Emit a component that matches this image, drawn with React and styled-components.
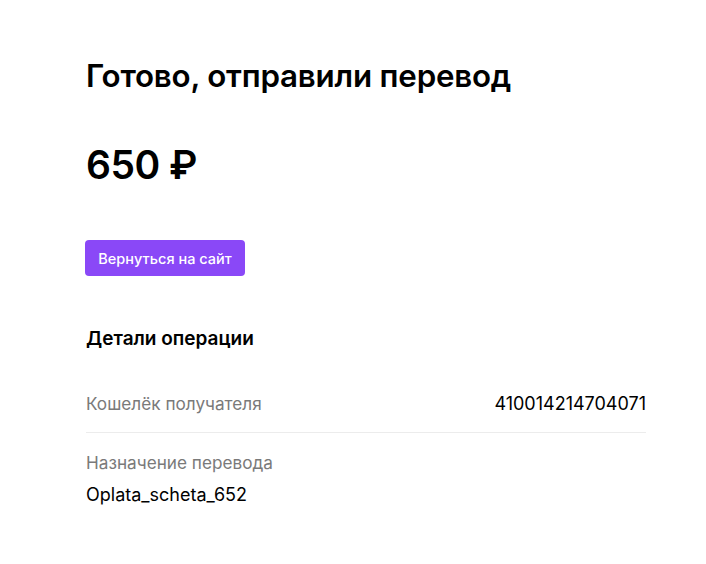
import React from "react";
import styled, { createGlobalStyle } from "styled-components";

const Global = createGlobalStyle`
  html, body { margin: 0; padding: 0; background: #fff; }
  body { font-family: Inter, "Noto Sans", sans-serif; color: #000; }
`;

const Page = styled.main`
  width: 560px;
  padding: 56px 0 0 86px;
  display: flex;
  flex-direction: column;
`;

const Title = styled.h1`
  margin: 0;
  font-size: 31.3px;
  line-height: 40px;
  font-weight: 600;
  letter-spacing: -0.2px;
`;

const Amount = styled.div`
  margin-top: 44px;
  font-size: 39px;
  line-height: 50px;
  font-weight: 600;
  letter-spacing: -0.5px;
`;

const Button = styled.button`
  margin-top: 50px;
  margin-left: -1px;
  align-self: flex-start;
  width: 160px;
  height: 36px;
  border: none;
  border-radius: 4px;
  background: #8a48f7;
  color: #fff;
  font-family: inherit;
  font-size: 14.5px;
  font-weight: 500;
  cursor: pointer;
  padding: 0;
`;

const SectionTitle = styled.h2`
  margin: 51px 0 0;
  font-size: 19px;
  line-height: 24px;
  font-weight: 600;
`;

const Details = styled.div`
  margin-top: 41px;
  display: flex;
  flex-direction: column;
`;

const Row = styled.div`
  display: flex;
  flex-direction: ${(p) => (p.$stacked ? "column" : "row")};
  justify-content: space-between;
  gap: ${(p) => (p.$stacked ? "8px" : "0")};
  padding: ${(p) => (p.$stacked ? "18px 0 0" : "0 0 16px")};
  border-bottom: ${(p) => (p.$divided ? "1.5px solid #ececec" : "none")};
`;

const Label = styled.span`
  font-size: 17.2px;
  line-height: 24px;
  color: #7a7a7a;
`;

const Value = styled.span`
  font-size: 18px;
  line-height: 24px;
  color: #000;
`;

export default function App() {
  return (
    <>
      <Global />
      <Page>
        <Title>Готово, отправили перевод</Title>
        <Amount>650 ₽</Amount>
        <Button>Вернуться на сайт</Button>
        <SectionTitle>Детали операции</SectionTitle>
        <Details>
          <Row $divided>
            <Label>Кошелёк получателя</Label>
            <Value>410014214704071</Value>
          </Row>
          <Row $stacked>
            <Label>Назначение перевода</Label>
            <Value>Oplata_scheta_652</Value>
          </Row>
        </Details>
      </Page>
    </>
  );
}
